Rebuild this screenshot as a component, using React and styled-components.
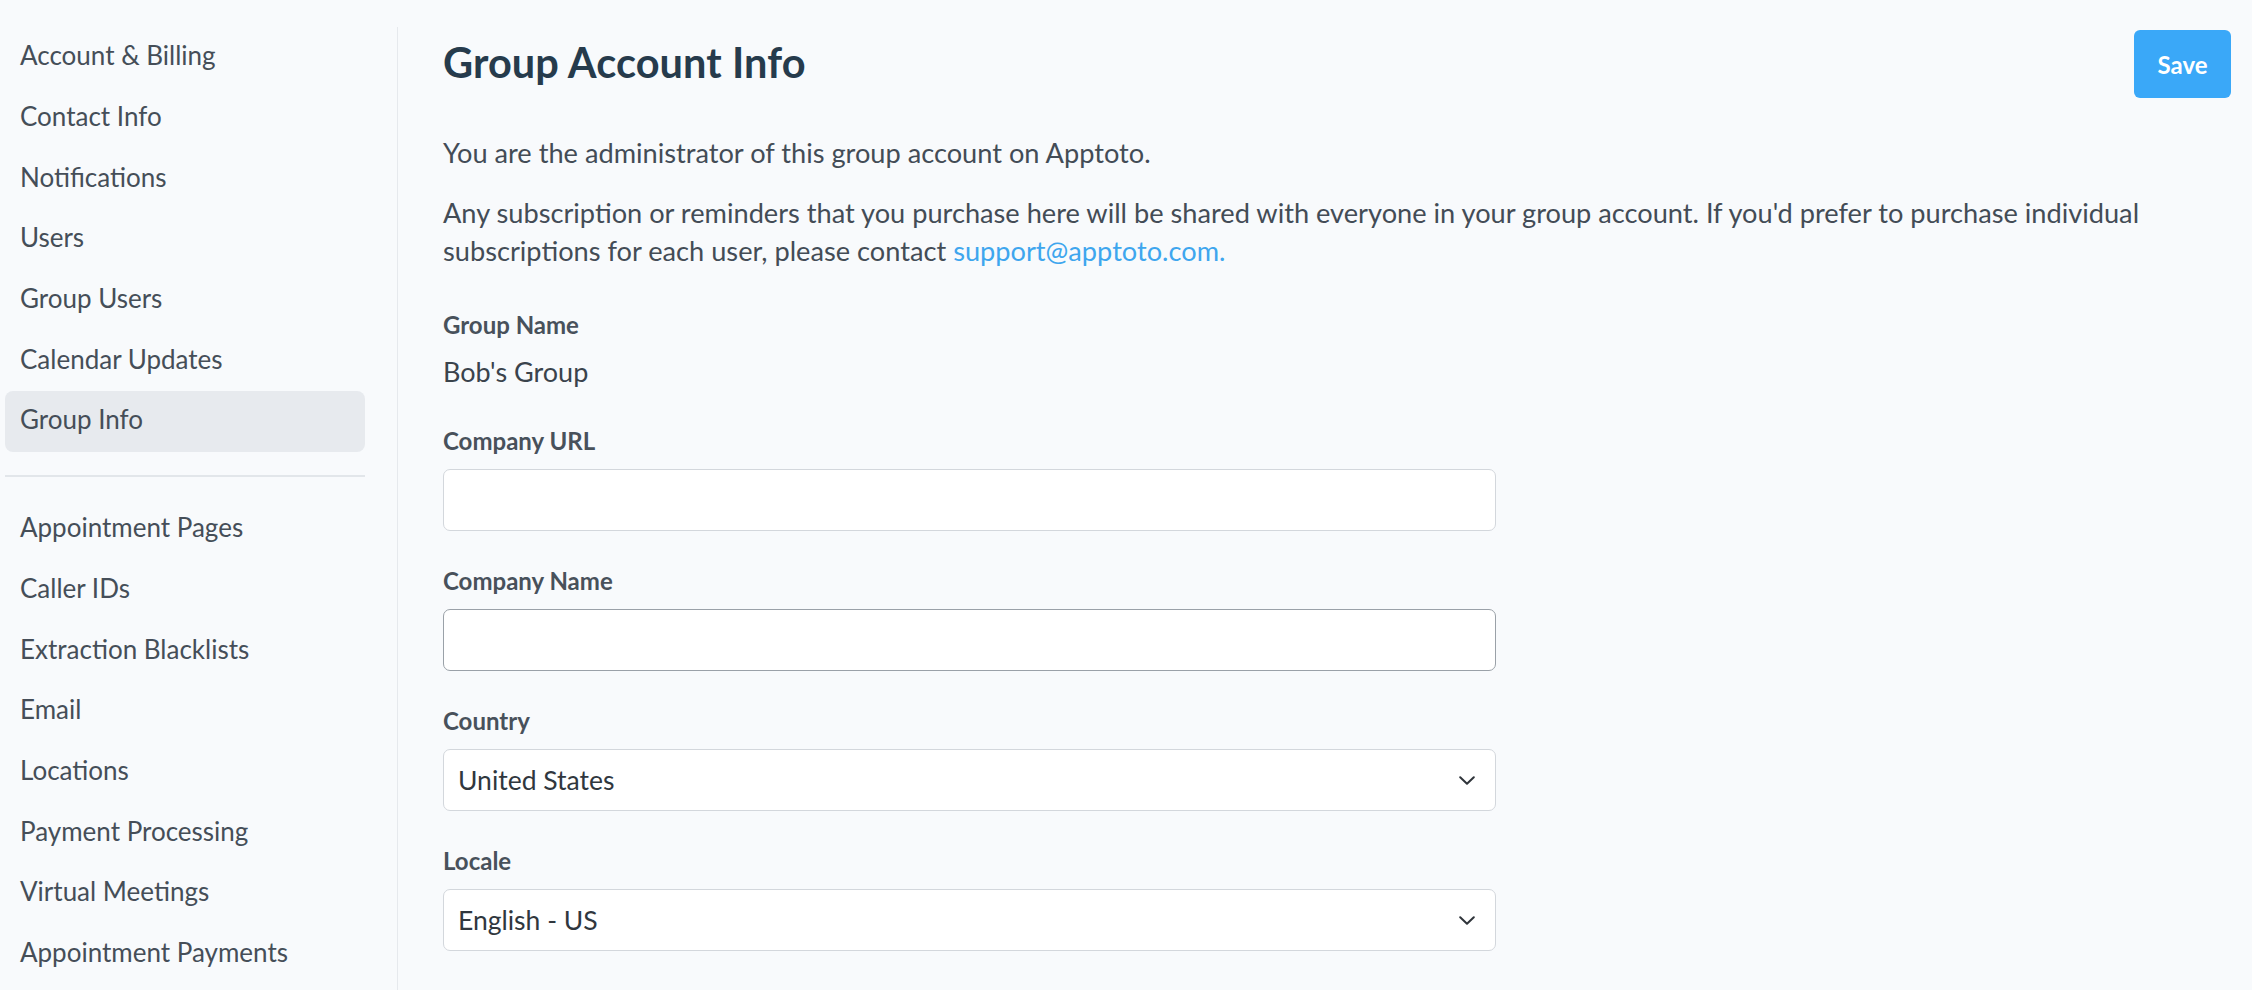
import React from "react";
import styled, { createGlobalStyle } from "styled-components";

const GlobalStyle = createGlobalStyle`
  * { box-sizing: border-box; }
  html, body {
    margin: 0;
    padding: 0;
    background: #f8fafc;
    font-family: "Lato", "Open Sans", sans-serif;
    color: #434c56;
  }
`;

const accountLinks = [
  "Account & Billing",
  "Contact Info",
  "Notifications",
  "Users",
  "Group Users",
  "Calendar Updates",
  "Group Info",
];

const settingsLinks = [
  "Appointment Pages",
  "Caller IDs",
  "Extraction Blacklists",
  "Email",
  "Locations",
  "Payment Processing",
  "Virtual Meetings",
  "Appointment Payments",
];

function ChevronDown() {
  return (
    <svg width="16" height="9" viewBox="0 0 16 9" fill="none">
      <path
        d="M1.2 1.2 L8 7.8 L14.8 1.2"
        stroke="#2f343a"
        strokeWidth="2"
        strokeLinecap="round"
        strokeLinejoin="round"
      />
    </svg>
  );
}

export default function App() {
  return (
    <>
      <GlobalStyle />
      <Page>
        <Sidebar>
          <NavList>
            {accountLinks.map((label) => (
              <NavItem key={label} $active={label === "Group Info"}>
                {label}
              </NavItem>
            ))}
          </NavList>
          <Divider />
          <NavList>
            {settingsLinks.map((label) => (
              <NavItem key={label}>{label}</NavItem>
            ))}
          </NavList>
        </Sidebar>

        <Main>
          <Header>
            <Title>Group Account Info</Title>
            <SaveButton>Save</SaveButton>
          </Header>

          <Intro>You are the administrator of this group account on Apptoto.</Intro>
          <Intro>
            Any subscription or reminders that you purchase here will be shared
            with everyone in your group account. If you'd prefer to purchase
            individual subscriptions for each user, please contact{" "}
            <MailLink href="#">support@apptoto.com.</MailLink>
          </Intro>

          <Form>
            <Field>
              <Label>Group Name</Label>
              <StaticValue>Bob's Group</StaticValue>
            </Field>

            <Field>
              <Label>Company URL</Label>
              <TextInput type="text" />
            </Field>

            <Field>
              <Label>Company Name</Label>
              <TextInput type="text" $focused />
            </Field>

            <Field>
              <Label>Country</Label>
              <SelectBox>
                <span>United States</span>
                <ChevronDown />
              </SelectBox>
            </Field>

            <Field>
              <Label>Locale</Label>
              <SelectBox>
                <span>English - US</span>
                <ChevronDown />
              </SelectBox>
            </Field>
          </Form>
        </Main>
      </Page>
    </>
  );
}

const Page = styled.div`
  display: flex;
  min-height: 100vh;
  padding-top: 27px;
`;

const Sidebar = styled.aside`
  width: 398px;
  flex-shrink: 0;
  padding: 0 32px 0 5px;
  border-right: 1px solid #e6e9ed;
`;

const NavList = styled.ul`
  list-style: none;
  margin: 0;
  padding: 0;
`;

const NavItem = styled.li`
  height: 60.7px;
  display: flex;
  align-items: center;
  padding: 0 0 4px 15px;
  border-radius: 8px;
  font-size: 26px;
  color: #454e58;
  cursor: pointer;
  background: ${(p) => (p.$active ? "#e7eaee" : "transparent")};
`;

const Divider = styled.hr`
  margin: 23px 0 22px;
  border: 0;
  border-top: 2px solid #e2e6ea;
`;

const Main = styled.main`
  flex: 1;
  padding: 3px 21px 0 45px;
`;

const Header = styled.div`
  display: flex;
  align-items: center;
  justify-content: space-between;
  height: 68px;
  margin-bottom: 36px;
`;

const Title = styled.h1`
  margin: 0 0 5px;
  font-size: 41.5px;
  font-weight: 700;
  color: #263b4c;
  letter-spacing: 0.1px;
`;

const SaveButton = styled.button`
  width: 97px;
  height: 68px;
  border: 0;
  border-radius: 6px;
  background: #3aa8f8;
  color: #ffffff;
  font-family: "Lato", sans-serif;
  font-size: 24px;
  font-weight: 700;
  cursor: pointer;
`;

const Intro = styled.p`
  margin: 0 0 22px;
  font-size: 27.2px;
  line-height: 38px;
  color: #434c56;
`;

const MailLink = styled.a`
  color: #3ea6ee;
  text-decoration: none;
`;

const Form = styled.div`
  width: 1053px;
  padding-top: 17px;
`;

const Field = styled.div`
  margin-bottom: 34px;
`;

const Label = styled.div`
  font-size: 24px;
  line-height: 32px;
  font-weight: 700;
  color: #48515b;
  margin-bottom: 12px;
`;

const StaticValue = styled.div`
  font-size: 27px;
  line-height: 38px;
  color: #3a434c;
  margin-bottom: 3px;
`;

const TextInput = styled.input`
  display: block;
  width: 100%;
  height: 62px;
  padding: 0 14px;
  border: 1px solid ${(p) => (p.$focused ? "#9aa1a8" : "#d3d7dc")};
  border-radius: 7px;
  background: #ffffff;
  font-family: "Lato", sans-serif;
  font-size: 26px;
  outline: none;
`;

const SelectBox = styled.div`
  display: flex;
  align-items: center;
  justify-content: space-between;
  height: 62px;
  padding: 0 20px 0 14px;
  border: 1px solid #d3d7dc;
  border-radius: 7px;
  background: #ffffff;
  font-size: 26.5px;
  color: #30373e;
  cursor: pointer;
`;
